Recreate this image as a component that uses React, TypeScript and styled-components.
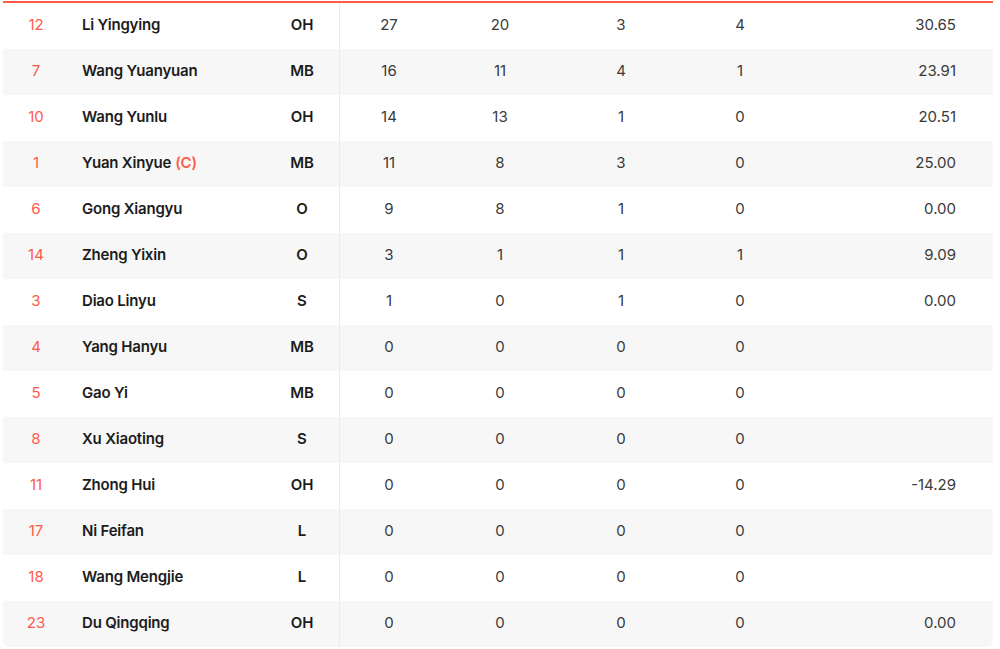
import React from 'react'
import styled, { createGlobalStyle } from 'styled-components'

const GlobalStyle = createGlobalStyle`
  body {
    margin: 0;
    background: #ffffff;
    font-family: Inter, 'Noto Sans', sans-serif;
  }
`

const Page = styled.div`
  padding: 1px 7px 0 3px;
`

const Table = styled.div`
  width: 990px;
  border-top: 2px solid #ff5a4a;
  border-radius: 0 0 6px 6px;
  overflow: hidden;
`

const Row = styled.div<{ striped: boolean }>`
  display: grid;
  grid-template-columns: 66px 198px 73px 98px 124px 118px 120px 193px;
  height: 46px;
  align-items: stretch;
  background: ${({ striped }) => (striped ? '#f7f7f7' : '#ffffff')};
`

const Cell = styled.div<{ align?: 'left' | 'center' | 'right' }>`
  display: flex;
  align-items: center;
  justify-content: ${({ align }) =>
    align === 'left' ? 'flex-start' : align === 'right' ? 'flex-end' : 'center'};
  font-size: 15px;
  padding-bottom: 4px;
`

const Number = styled(Cell)`
  color: #ff5a4a;
  font-weight: 400;
`

const Name = styled(Cell)`
  padding-left: 13px;
  color: #1c1c1c;
  font-weight: 600;
  letter-spacing: -0.2px;
`

const Captain = styled.span`
  color: #ff5a4a;
  margin-left: 4px;
`

const Position = styled(Cell)`
  color: #1c1c1c;
  font-weight: 600;
  border-right: 1px solid #ececec;
  padding-right: 2px;
`

const Stat = styled(Cell)`
  color: #3a3a3a;
  font-weight: 400;
`

const Rating = styled(Stat)`
  padding-right: 37px;
`

interface Player {
  no: number
  name: string
  captain?: boolean
  pos: string
  stats: number[]
  rating: string
}

const players: Player[] = [
  { no: 12, name: 'Li Yingying', pos: 'OH', stats: [27, 20, 3, 4], rating: '30.65' },
  { no: 7, name: 'Wang Yuanyuan', pos: 'MB', stats: [16, 11, 4, 1], rating: '23.91' },
  { no: 10, name: 'Wang Yunlu', pos: 'OH', stats: [14, 13, 1, 0], rating: '20.51' },
  { no: 1, name: 'Yuan Xinyue', captain: true, pos: 'MB', stats: [11, 8, 3, 0], rating: '25.00' },
  { no: 6, name: 'Gong Xiangyu', pos: 'O', stats: [9, 8, 1, 0], rating: '0.00' },
  { no: 14, name: 'Zheng Yixin', pos: 'O', stats: [3, 1, 1, 1], rating: '9.09' },
  { no: 3, name: 'Diao Linyu', pos: 'S', stats: [1, 0, 1, 0], rating: '0.00' },
  { no: 4, name: 'Yang Hanyu', pos: 'MB', stats: [0, 0, 0, 0], rating: '' },
  { no: 5, name: 'Gao Yi', pos: 'MB', stats: [0, 0, 0, 0], rating: '' },
  { no: 8, name: 'Xu Xiaoting', pos: 'S', stats: [0, 0, 0, 0], rating: '' },
  { no: 11, name: 'Zhong Hui', pos: 'OH', stats: [0, 0, 0, 0], rating: '-14.29' },
  { no: 17, name: 'Ni Feifan', pos: 'L', stats: [0, 0, 0, 0], rating: '' },
  { no: 18, name: 'Wang Mengjie', pos: 'L', stats: [0, 0, 0, 0], rating: '' },
  { no: 23, name: 'Du Qingqing', pos: 'OH', stats: [0, 0, 0, 0], rating: '0.00' }
]

export default function App() {
  return (
    <Page>
      <GlobalStyle />
      <Table>
        {players.map((p, i) => (
          <Row key={p.no} striped={i % 2 === 1}>
            <Number>{p.no}</Number>
            <Name align="left">
              {p.name}
              {p.captain && <Captain>(C)</Captain>}
            </Name>
            <Position>{p.pos}</Position>
            {p.stats.map((s, j) => (
              <Stat key={j}>{s}</Stat>
            ))}
            <Rating align="right">{p.rating}</Rating>
          </Row>
        ))}
      </Table>
    </Page>
  )
}
